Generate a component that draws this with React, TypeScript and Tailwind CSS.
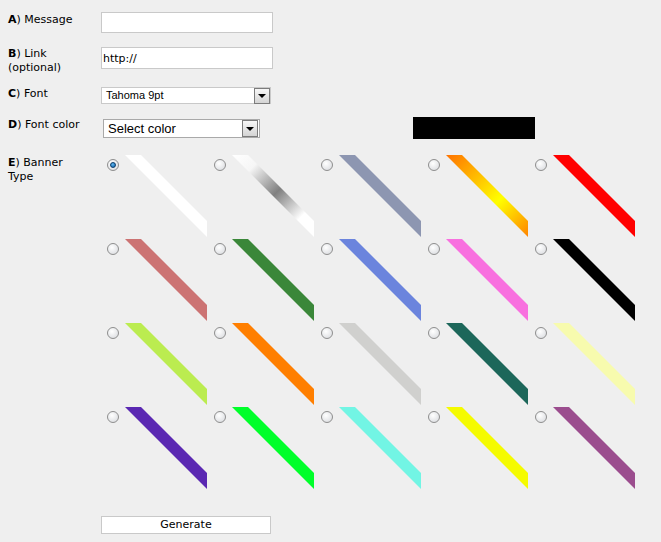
import React from 'react';

type Banner = { id: string; fill?: string; grad?: 'silver' | 'fire' };

const rows: Banner[][] = [
  [
    { id: 'white', fill: '#ffffff' },
    { id: 'silver', grad: 'silver' },
    { id: 'slate', fill: '#8d96b1' },
    { id: 'fire', grad: 'fire' },
    { id: 'red', fill: '#ff0000' },
  ],
  [
    { id: 'rose', fill: '#cc7373' },
    { id: 'green', fill: '#3a8739' },
    { id: 'blue', fill: '#6b84dd' },
    { id: 'pink', fill: '#f870df' },
    { id: 'black', fill: '#000000' },
  ],
  [
    { id: 'lime', fill: '#bbec50' },
    { id: 'orange', fill: '#ff7f00' },
    { id: 'grey', fill: '#d0d0ce' },
    { id: 'teal', fill: '#1d675a' },
    { id: 'cream', fill: '#f7fbae' },
  ],
  [
    { id: 'purple', fill: '#5a28b2' },
    { id: 'neon', fill: '#00ff2a' },
    { id: 'aqua', fill: '#72f5e4' },
    { id: 'yellow', fill: '#f5fb00' },
    { id: 'plum', fill: '#9b4d8e' },
  ],
];

function Ribbon({ banner }: { banner: Banner }) {
  const gid = `g-${banner.id}`;
  let fill = banner.fill ?? '#fff';
  if (banner.grad) fill = `url(#${gid})`;
  return (
    <svg width="82" height="82" viewBox="0 0 82 82" className="block shrink-0">
      {banner.grad === 'silver' && (
        <defs>
          <linearGradient id={gid} x1="0" y1="0" x2="82" y2="82" gradientUnits="userSpaceOnUse">
            <stop offset="0" stopColor="#ffffff" />
            <stop offset="0.2" stopColor="#f6f6f6" />
            <stop offset="0.5" stopColor="#808080" />
            <stop offset="0.8" stopColor="#ffffff" />
            <stop offset="1" stopColor="#ffffff" />
          </linearGradient>
        </defs>
      )}
      {banner.grad === 'fire' && (
        <defs>
          <linearGradient id={gid} x1="0" y1="0" x2="82" y2="82" gradientUnits="userSpaceOnUse">
            <stop offset="0" stopColor="#ff7200" />
            <stop offset="0.6" stopColor="#ffff00" />
            <stop offset="1" stopColor="#ff8400" />
          </linearGradient>
        </defs>
      )}
      <polygon points="0,0 16,0 82,66 82,82" fill={fill} />
    </svg>
  );
}

function Radio({ checked }: { checked?: boolean }) {
  return (
    <span className="mt-[4px] flex h-[12px] w-[12px] shrink-0 items-center justify-center rounded-full border border-[#8e8e8e] bg-[radial-gradient(circle_at_40%_35%,#ffffff,#d6d8dc)]">
      {checked && (
        <span className="h-[6px] w-[6px] rounded-full border border-[#0b3d6b] bg-[radial-gradient(circle_at_40%_35%,#5fb7f0,#0d5fa8)]" />
      )}
    </span>
  );
}

function ArrowBox({ size }: { size: 'sm' | 'md' }) {
  return (
    <span
      className={`flex items-center justify-center border border-[#7c7c7c] bg-gradient-to-b from-[#f7f7f7] to-[#d4d4d4] ${
        size === 'sm' ? 'h-[16px] w-[16px]' : 'h-[17px] w-[16px]'
      }`}
    >
      <span className="h-0 w-0 border-x-[4px] border-t-[4px] border-x-transparent border-t-black" />
    </span>
  );
}

function Label({ letter, children }: { letter: string; children: React.ReactNode }) {
  return (
    <div className="w-[93px] shrink-0 pr-[14px] leading-[14px]">
      <b>{letter}</b>) {children}
    </div>
  );
}

export default function App() {
  return (
    <div className="h-[542px] w-[661px] bg-[#efefef] pl-[8px] pt-[12px] text-[11px] text-black [font-family:'DejaVu_Sans',Verdana,sans-serif]">
      {/* A */}
      <div className="flex h-[21px]">
        <div className="pt-[1px]">
          <Label letter="A">Message</Label>
        </div>
        <input className="h-[21px] w-[172px] border border-[#c9c9c9] bg-white px-[2px] outline-none" />
      </div>

      {/* B */}
      <div className="mt-[14px] flex h-[28px]">
        <div>
          <Label letter="B">Link (optional)</Label>
        </div>
        <input
          defaultValue="http://"
          className="h-[22px] w-[172px] border border-[#c9c9c9] bg-white px-[1px] text-[11px] outline-none"
        />
      </div>

      {/* C */}
      <div className="mt-[12px] flex h-[18px]">
        <div>
          <Label letter="C">Font</Label>
        </div>
        <div className="flex h-[17px] w-[170px] items-center justify-between border border-[#c9c9c9] bg-white">
          <span className="pl-[4px] text-[11px] [font-family:'Liberation_Sans',Arial,sans-serif]">Tahoma 9pt</span>
          <ArrowBox size="sm" />
        </div>
      </div>

      {/* D */}
      <div className="mt-[12px] flex h-[22px]">
        <div className="pt-[1px]">
          <Label letter="D">Font color</Label>
        </div>
        <div className="mt-[2px] ml-[2px] flex h-[19px] w-[157px] items-center justify-between border border-[#a9a9a9] bg-white pr-[1px]">
          <span className="pl-[4px] text-[13px] [font-family:'Liberation_Sans',Arial,sans-serif]">Select color</span>
          <ArrowBox size="md" />
        </div>
        <div className="ml-[153px] h-[22px] w-[122px] bg-black" />
      </div>

      {/* E */}
      <div className="mt-[16px] flex">
        <div className="w-[99px] shrink-0 pt-[1px]">
          <div className="w-[76px] leading-[14px]">
            <b>E</b>) Banner Type
          </div>
        </div>
        <div className="w-[535px]">
          <div className="grid grid-cols-[repeat(5,107px)] gap-y-[2px]">
            {rows.flat().map((b, i) => (
              <label key={b.id} className="flex h-[82px] gap-[6px]">
                <Radio checked={i === 0} />
                <Ribbon banner={b} />
              </label>
            ))}
          </div>
          <button className="mt-[27px] ml-[-6px] h-[18px] w-[170px] border border-[#c9c9c9] bg-white text-[11px] leading-[16px]">
            Generate
          </button>
        </div>
      </div>
    </div>
  );
}
